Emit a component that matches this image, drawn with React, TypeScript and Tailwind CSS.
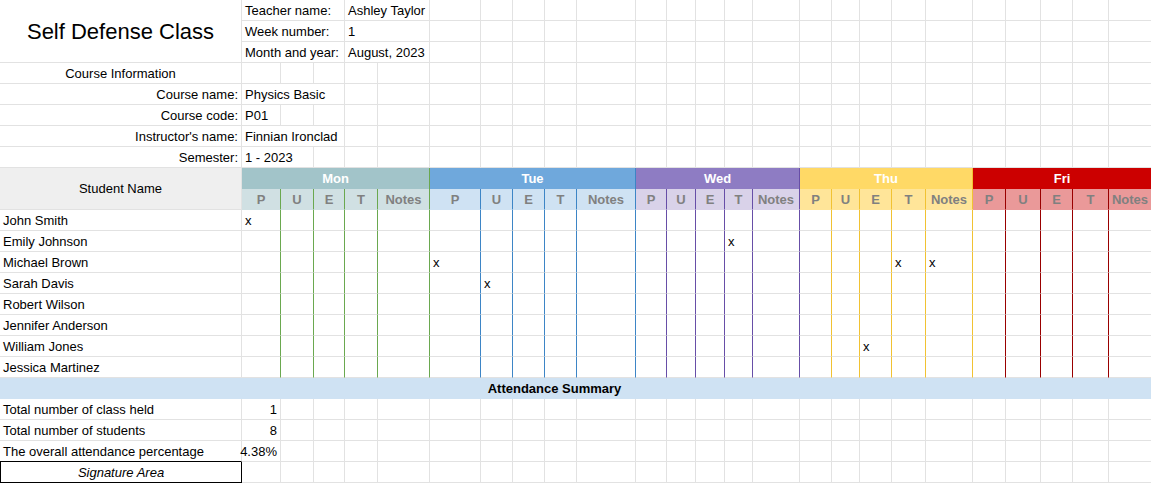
import * as React from 'react'

const grid =
  'grid grid-cols-[242px_39px_33px_31px_33px_52px_51px_32px_32px_32px_59px_31px_29px_29px_28px_47px_32px_28px_32px_34px_47px_33px_35px_32px_36px_43px] auto-rows-[21px]'

const gray = 'border-r border-b border-[#e2e2e2]'

const days = [
  {
    name: 'Mon',
    head: 'bg-[#a2c4c9] border-r border-r-[#6aa84f]',
    sub: 'bg-[#d0e0e3] border-r border-b border-r-[#6aa84f] border-b-[#d0e0e3]',
    line: 'border-r border-b border-r-[#6aa84f] border-b-[#e2e2e2]',
  },
  {
    name: 'Tue',
    head: 'bg-[#6fa8dc] border-r border-r-[#3d85c6]',
    sub: 'bg-[#cfe2f3] border-r border-b border-r-[#3d85c6] border-b-[#cfe2f3]',
    line: 'border-r border-b border-r-[#3d85c6] border-b-[#e2e2e2]',
  },
  {
    name: 'Wed',
    head: 'bg-[#8e7cc3] border-r border-r-[#674ea7]',
    sub: 'bg-[#d9d2e9] border-r border-b border-r-[#674ea7] border-b-[#d9d2e9]',
    line: 'border-r border-b border-r-[#674ea7] border-b-[#e2e2e2]',
  },
  {
    name: 'Thu',
    head: 'bg-[#ffd966] border-r border-r-[#f1c232]',
    sub: 'bg-[#ffe599] border-r border-b border-r-[#f1c232] border-b-[#ffe599]',
    line: 'border-r border-b border-r-[#f1c232] border-b-[#e2e2e2]',
  },
  {
    name: 'Fri',
    head: 'bg-[#cc0000] border-r border-r-[#990000]',
    sub: 'bg-[#ea9999] border-r border-b border-r-[#990000] border-b-[#ea9999]',
    line: 'border-r border-b border-r-[#990000] border-b-[#e2e2e2]',
  },
]

const subCols = ['P', 'U', 'E', 'T', 'Notes']

// column numbers (1..25) that hold an "x" for each student
const students = [
  { name: 'John Smith', marks: [1] },
  { name: 'Emily Johnson', marks: [14] },
  { name: 'Michael Brown', marks: [6, 19, 20] },
  { name: 'Sarah Davis', marks: [7] },
  { name: 'Robert Wilson', marks: [] as number[] },
  { name: 'Jennifer Anderson', marks: [] as number[] },
  { name: 'William Jones', marks: [18] },
  { name: 'Jessica Martinez', marks: [] as number[] },
]

const Empty = ({ n }: { n: number }) => (
  <>
    {Array.from({ length: n }).map((_, i) => (
      <div key={i} className={gray} />
    ))}
  </>
)

const App = () => {
  return (
    <div className="w-[1151px] h-[483px] overflow-hidden bg-white font-['Liberation_Sans',Arial,sans-serif] text-[13px] leading-[21px] text-black">
      <div className={grid}>
        {/* Title block */}
        <div className="row-span-3 border-r border-b border-[#e2e2e2] flex items-center justify-center text-[22px]">
          Self Defense Class
        </div>
        <div className={`${gray} col-span-3 pl-[3px]`}>Teacher name:</div>
        <div className={`${gray} col-span-2 pl-[3px]`}>Ashley Taylor</div>
        <Empty n={20} />
        <div className={`${gray} col-span-3 pl-[3px]`}>Week number:</div>
        <div className={`${gray} col-span-2 pl-[3px]`}>1</div>
        <Empty n={20} />
        <div className={`${gray} col-span-3 pl-[3px]`}>Month and year:</div>
        <div className={`${gray} col-span-2 pl-[3px]`}>August, 2023</div>
        <Empty n={20} />

        {/* Course info */}
        <div className={`${gray} text-center`}>Course Information</div>
        <Empty n={25} />
        <div className={`${gray} text-right pr-[3px]`}>Course name:</div>
        <div className={`${gray} col-span-3 pl-[3px] whitespace-nowrap`}>Physics Basic</div>
        <Empty n={22} />
        <div className={`${gray} text-right pr-[3px]`}>Course code:</div>
        <div className={`${gray} pl-[3px]`}>P01</div>
        <Empty n={24} />
        <div className={`${gray} text-right pr-[3px]`}>Instructor's name:</div>
        <div className={`${gray} col-span-3 pl-[3px] whitespace-nowrap`}>Finnian Ironclad</div>
        <Empty n={22} />
        <div className={`${gray} text-right pr-[3px]`}>Semester:</div>
        <div className={`${gray} col-span-2 pl-[3px] whitespace-nowrap`}>1 - 2023</div>
        <Empty n={23} />

        {/* Day headers */}
        <div className="row-span-2 bg-[#efefef] border-r border-b border-[#e2e2e2] flex items-center justify-center">
          Student Name
        </div>
        {days.map((d) => (
          <div
            key={d.name}
            className={`${d.head} col-span-5 text-center font-bold text-white`}
          >
            {d.name}
          </div>
        ))}
        {days.map((d) =>
          subCols.map((s) => (
            <div
              key={d.name + s}
              className={`${d.sub} text-center font-bold text-[#808080]`}
            >
              {s}
            </div>
          ))
        )}

        {/* Students */}
        {students.map((st) => (
          <React.Fragment key={st.name}>
            <div className={`${gray} pl-[3px] whitespace-nowrap`}>{st.name}</div>
            {days.map((d, di) =>
              subCols.map((s, si) => {
                const col = di * 5 + si + 1
                return (
                  <div key={d.name + s} className={`${d.line} pl-[3px]`}>
                    {st.marks.includes(col) ? 'x' : ''}
                  </div>
                )
              })
            )}
          </React.Fragment>
        ))}

        {/* Summary */}
        <div className="col-span-26 bg-[#cfe2f3] border-b border-[#cfe2f3]">
          <div className="w-[1109px] text-center font-bold">Attendance Summary</div>
        </div>
        <div className={`${gray} pl-[3px] whitespace-nowrap`}>Total number of class held</div>
        <div className={`${gray} text-right pr-[3px]`}>1</div>
        <Empty n={24} />
        <div className={`${gray} pl-[3px] whitespace-nowrap`}>Total number of students</div>
        <div className={`${gray} text-right pr-[3px]`}>8</div>
        <Empty n={24} />
        <div className="border-r border-r-[#e2e2e2] border-b border-b-black pl-[3px] whitespace-nowrap">
          The overall attendance percentage
        </div>
        <div className={`${gray} flex justify-end pr-[3px] whitespace-nowrap`}>4.38%</div>
        <Empty n={24} />
        <div className="border border-t-0 border-black text-center italic">Signature Area</div>
        <Empty n={25} />
      </div>
    </div>
  )
}

export default App
